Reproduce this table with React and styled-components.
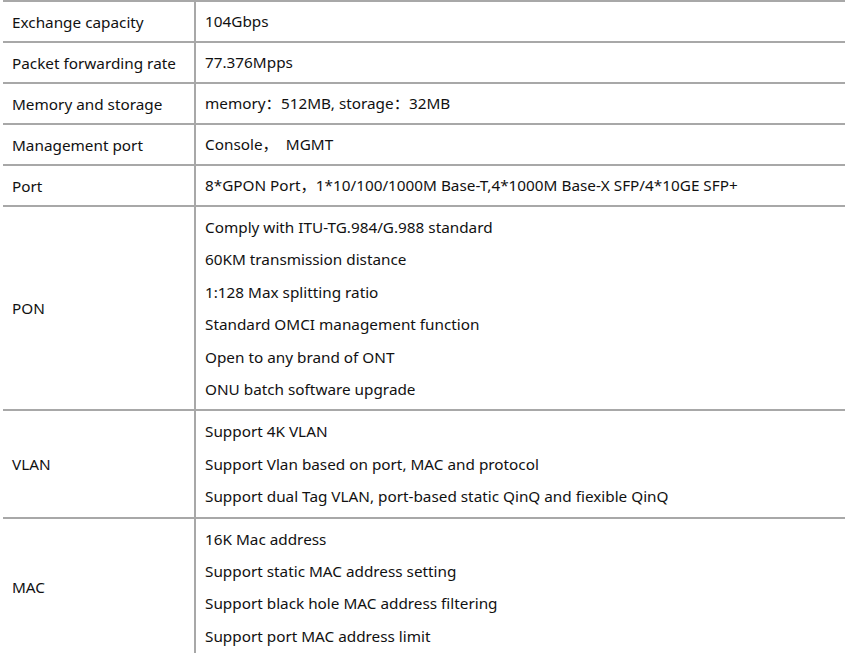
import React from 'react';
import styled, { createGlobalStyle } from 'styled-components';

const specs = [
  { label: 'Exchange capacity', values: ['104Gbps'] },
  { label: 'Packet forwarding rate', values: ['77.376Mpps'] },
  { label: 'Memory and storage', values: ['memory：512MB, storage：32MB'] },
  { label: 'Management port', values: ['Console，  MGMT'] },
  { label: 'Port', values: ['8*GPON Port，1*10/100/1000M Base-T,4*1000M Base-X SFP/4*10GE SFP+'] },
  {
    label: 'PON',
    values: [
      'Comply with ITU-TG.984/G.988 standard',
      '60KM transmission distance',
      '1:128 Max splitting ratio',
      'Standard OMCI management function',
      'Open to any brand of ONT',
      'ONU batch software upgrade',
    ],
  },
  {
    label: 'VLAN',
    values: [
      'Support 4K VLAN',
      'Support Vlan based on port, MAC and protocol',
      'Support dual Tag VLAN, port-based static QinQ and fiexible QinQ',
    ],
  },
  {
    label: 'MAC',
    values: [
      '16K Mac address',
      'Support static MAC address setting',
      'Support black hole MAC address filtering',
      'Support port MAC address limit',
    ],
  },
];

function App() {
  return (
    <>
      <GlobalStyle />
      <SpecTable>
        {specs.map((spec, index) => (
          <Row key={index}>
            <Label>{spec.label}</Label>
            <Value $multi={spec.values.length > 1}>
              {spec.values.map((line, i) => (
                <Line key={i}>{line}</Line>
              ))}
            </Value>
          </Row>
        ))}
      </SpecTable>
    </>
  );
}

const GlobalStyle = createGlobalStyle`
  body {
    margin: 0;
    background: #ffffff;
    font-family: "Noto Sans", "Noto Sans CJK SC", sans-serif;
    color: #111111;
  }
`;

const SpecTable = styled.div`
  width: 842px;
  margin-left: 3px;
  border-top: 2px solid #a8a8a8;
  font-size: 15.3px;
`;

const Row = styled.div`
  display: grid;
  grid-template-columns: 193px 1fr;
  border-bottom: 2px solid #a8a8a8;
`;

const Label = styled.div`
  display: flex;
  align-items: center;
  padding-left: 9px;
  border-right: 2px solid #a8a8a8;
`;

const Value = styled.div`
  padding: ${p => (p.$multi ? '4px 9px' : '3.3px 9px')};
`;

const Line = styled.div`
  line-height: 32.4px;
  white-space: pre;
`;

export default App;
